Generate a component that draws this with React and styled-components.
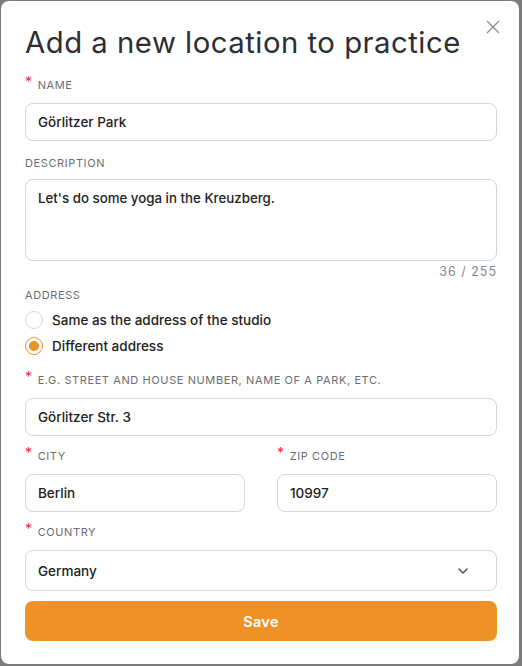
import React, { useState } from "react";
import styled, { createGlobalStyle } from "styled-components";

const GlobalStyle = createGlobalStyle`
  html, body {
    margin: 0;
    padding: 0;
    background: #7b7b7b;
  }
  body {
    font-family: Inter, "Open Sans", "Liberation Sans", sans-serif;
  }
  * { box-sizing: border-box; }
`;

const Backdrop = styled.div`
  padding: 1px 3px 0 1px;
  height: 666px;
  overflow: hidden;
`;

const Modal = styled.div`
  position: relative;
  background: #fff;
  border-radius: 8px;
  height: 663px;
  padding: 24px 22px 0 24px;
  display: flex;
  flex-direction: column;
`;

const Close = styled.button`
  position: absolute;
  top: 17px;
  right: 17px;
  width: 18px;
  height: 18px;
  padding: 0;
  border: 0;
  background: none;
  cursor: pointer;
`;

const Title = styled.h1`
  margin: 0 0 15px 0;
  font-size: 29.3px;
  font-weight: 400;
  color: #2c2e33;
  letter-spacing: 0.5px;
  line-height: 36px;
`;

const Field = styled.div`
  display: flex;
  flex-direction: column;
  margin-bottom: ${(p) => p.$mb ?? 12}px;
  flex: ${(p) => (p.$grow ? 1 : "none")};
`;

const Label = styled.label`
  display: flex;
  align-items: flex-start;
  font-size: 11px;
  letter-spacing: 0.6px;
  color: #6b6d72;
  text-transform: uppercase;
  height: 18px;
  margin-bottom: ${(p) => p.$mb ?? 9}px;
  line-height: 18px;
`;

const Star = styled.span`
  color: #f0283c;
  font-size: 14px;
  line-height: 12px;
  margin-right: 5px;
`;

const Input = styled.input`
  height: 38px;
  width: 100%;
  border: 1px solid #d6d6d8;
  border-radius: 8px;
  padding: 0 12px;
  font-family: inherit;
  font-size: 13.5px;
  font-weight: 500;
  color: #222;
  outline: none;
`;

const TextArea = styled.textarea`
  height: 82px;
  width: 100%;
  border: 1px solid #d6d6d8;
  border-radius: 8px;
  padding: 10px 12px;
  font-family: inherit;
  font-size: 13.3px;
  font-weight: 500;
  color: #222;
  resize: none;
  outline: none;
`;

const Counter = styled.div`
  text-align: right;
  font-size: 12.5px;
  line-height: 15px;
  color: #85878b;
  letter-spacing: 1px;
  margin-top: 3px;
`;

const RadioRow = styled.label`
  display: flex;
  align-items: center;
  gap: 9px;
  height: 26px;
  font-size: 13.5px;
  font-weight: 500;
  color: #222;
  cursor: pointer;
`;

const RadioDot = styled.span`
  width: 18px;
  height: 18px;
  border-radius: 50%;
  border: 1px solid ${(p) => (p.$on ? "#ee9227" : "#d6d6d8")};
  display: flex;
  align-items: center;
  justify-content: center;
  &::after {
    content: "";
    width: 10px;
    height: 10px;
    border-radius: 50%;
    background: ${(p) => (p.$on ? "#ee9227" : "transparent")};
  }
`;

const Row = styled.div`
  display: flex;
  gap: 32px;
`;

const SelectBox = styled.div`
  height: 41px;
  border: 1px solid #d6d6d8;
  border-radius: 8px;
  display: flex;
  align-items: center;
  padding: 0 26px 0 12px;
  font-size: 13.5px;
  font-weight: 500;
  color: #222;
  justify-content: space-between;
`;

const SaveButton = styled.button`
  height: 40px;
  width: 100%;
  border: 0;
  border-radius: 8px;
  background: #ee9227;
  color: #fff;
  font-family: inherit;
  font-size: 14.5px;
  font-weight: 600;
  letter-spacing: 0.3px;
  cursor: pointer;
`;

const RadioGroup = styled.div`
  display: flex;
  flex-direction: column;
  margin-top: -6px;
`;

export default function App() {
  const [mode, setMode] = useState("different");
  const [desc, setDesc] = useState("Let's do some yoga in the Kreuzberg.");
  return (
    <>
      <GlobalStyle />
      <Backdrop>
        <Modal>
          <Close aria-label="Close">
            <svg width="18" height="18" viewBox="0 0 18 18">
              <path d="M3 3 L15 15 M15 3 L3 15" stroke="#8a8a8a" strokeWidth="1.2" />
            </svg>
          </Close>
          <Title>Add a new location to practice</Title>

          <Field $mb={13}>
            <Label><Star>*</Star>Name</Label>
            <Input defaultValue="Görlitzer Park" />
          </Field>

          <Field $mb={7}>
            <Label $mb={7}>Description</Label>
            <TextArea value={desc} onChange={(e) => setDesc(e.target.value)} />
            <Counter>{desc.length} / 255</Counter>
          </Field>

          <Field $mb={12}>
            <Label>Address</Label>
            <RadioGroup>
              <RadioRow onClick={() => setMode("same")}>
                <RadioDot $on={mode === "same"} />
                Same as the address of the studio
              </RadioRow>
              <RadioRow onClick={() => setMode("different")}>
                <RadioDot $on={mode === "different"} />
                Different address
              </RadioRow>
            </RadioGroup>
          </Field>

          <Field $mb={11}>
            <Label><Star>*</Star>E.g. street and house number, name of a park, etc.</Label>
            <Input defaultValue="Görlitzer Str. 3" />
          </Field>

          <Row>
            <Field $grow $mb={11}>
              <Label><Star>*</Star>City</Label>
              <Input defaultValue="Berlin" />
            </Field>
            <Field $grow $mb={11}>
              <Label><Star>*</Star>Zip code</Label>
              <Input defaultValue="10997" />
            </Field>
          </Row>

          <Field $mb={10}>
            <Label><Star>*</Star>Country</Label>
            <SelectBox>
              Germany
              <svg width="14" height="14" viewBox="0 0 14 14">
                <path d="M3 5 L7 9 L11 5" fill="none" stroke="#555" strokeWidth="1.6" strokeLinecap="round" strokeLinejoin="round" />
              </svg>
            </SelectBox>
          </Field>

          <SaveButton>Save</SaveButton>
        </Modal>
      </Backdrop>
    </>
  );
}
